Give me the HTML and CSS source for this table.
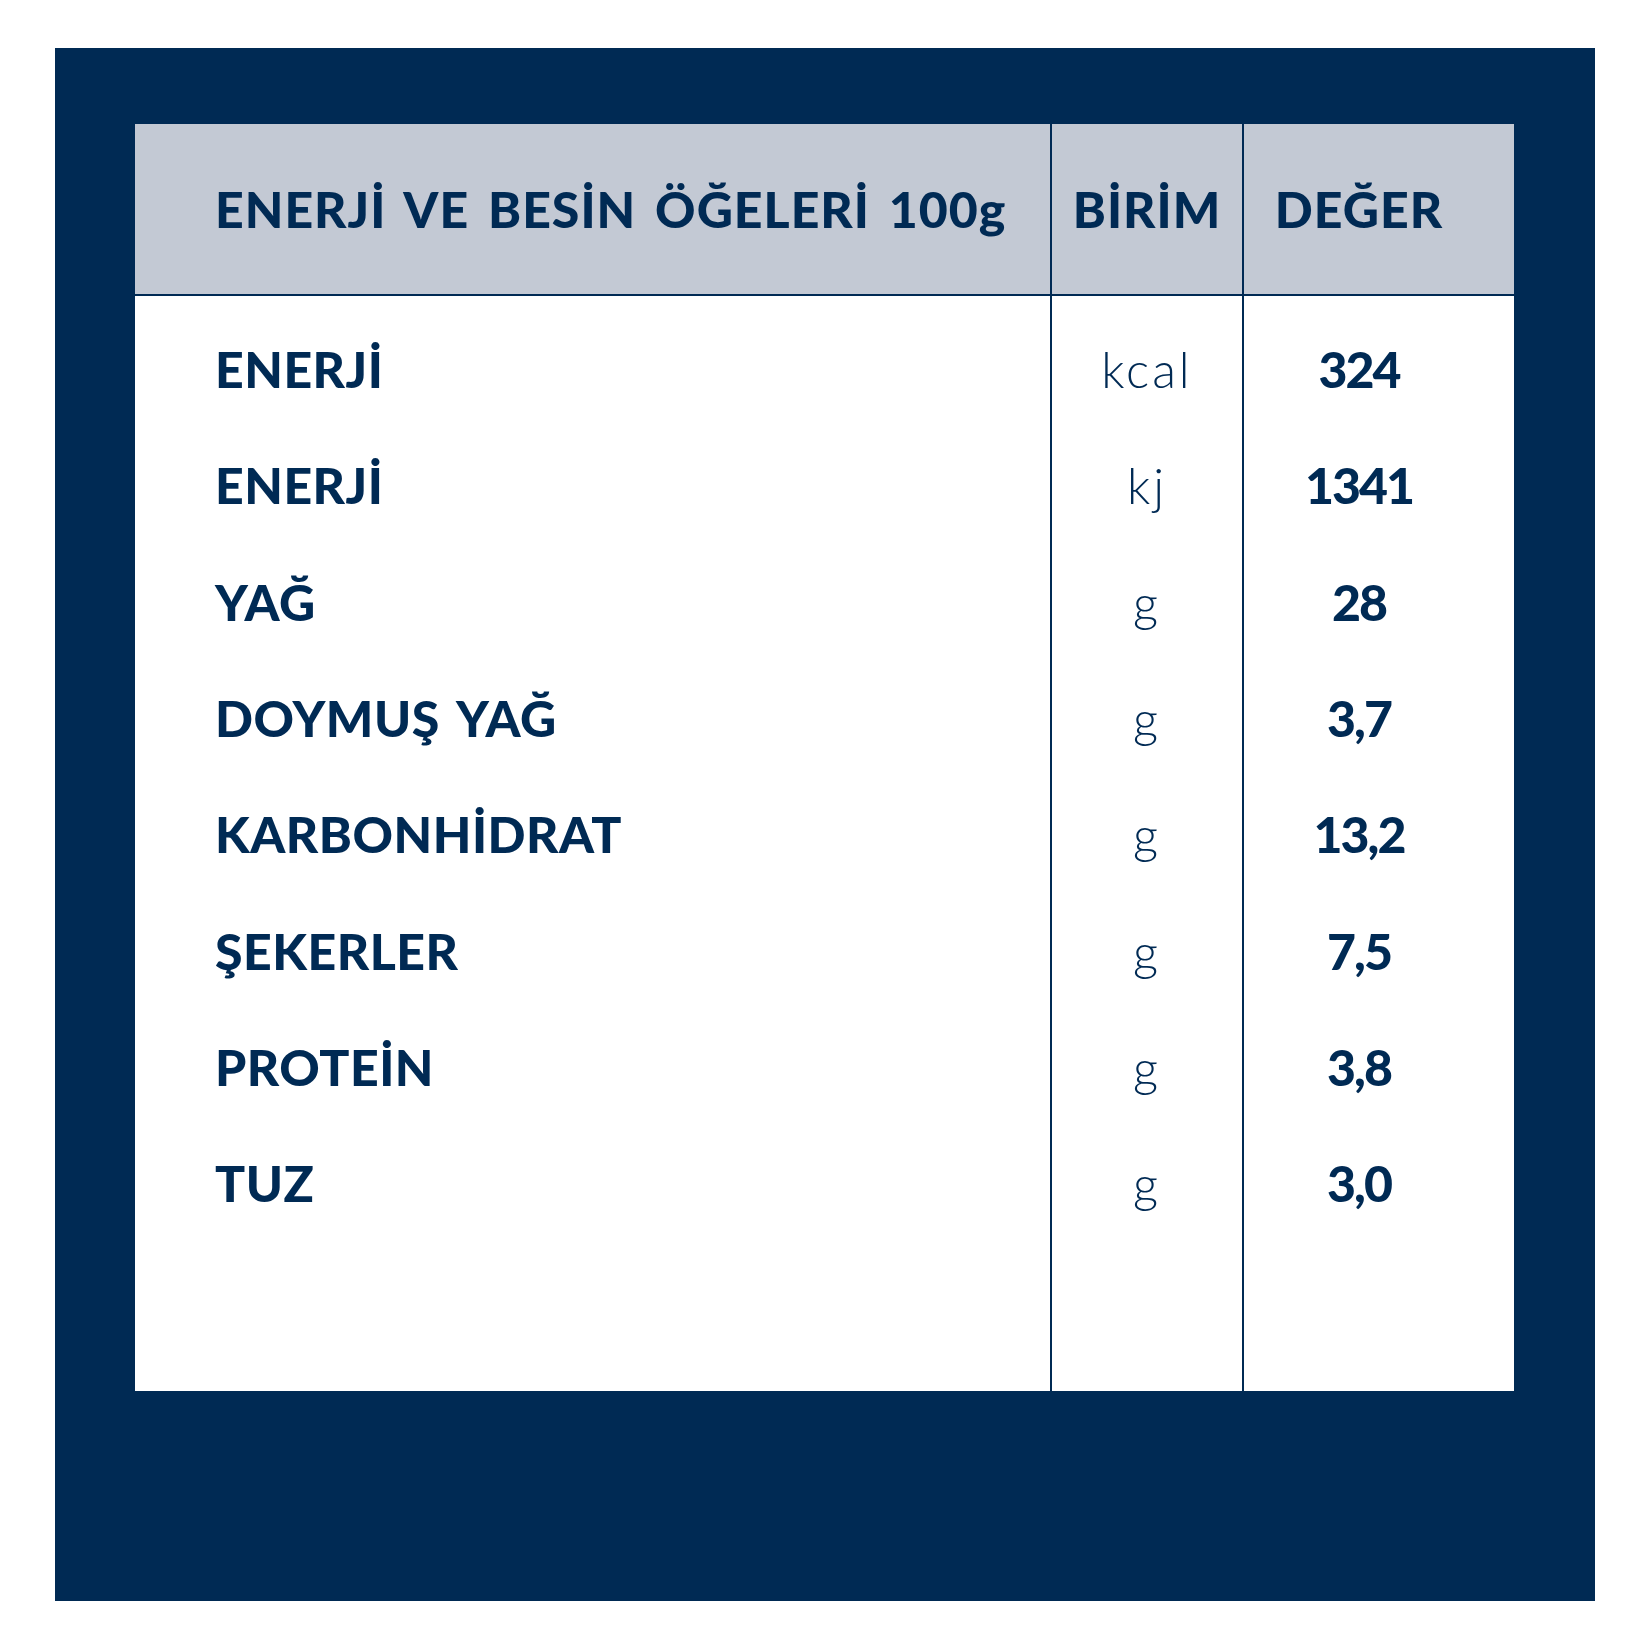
FILE: index.html
```html
<!DOCTYPE html>
<html lang="tr">
<head>
<meta charset="utf-8">
<title>Besin Değerleri</title>
<link rel="stylesheet" href="styles.css">
</head>
<body>
<div class="page">
  <div class="frame">
    <table class="nutri">
      <colgroup>
        <col class="col-name">
        <col class="col-unit">
        <col class="col-val">
      </colgroup>
      <thead>
        <tr>
          <th class="name">ENERJİ VE BESİN ÖĞELERİ 100g</th>
          <th class="unit">BİRİM</th>
          <th class="val">DEĞER</th>
        </tr>
      </thead>
      <tbody>
        <tr class="spacer"><td class="name"></td><td class="unit"></td><td class="val"></td></tr>
        <tr class="row"><td class="name">ENERJİ</td><td class="unit">kcal</td><td class="val">324</td></tr>
        <tr class="row"><td class="name">ENERJİ</td><td class="unit">kj</td><td class="val">1341</td></tr>
        <tr class="row"><td class="name">YAĞ</td><td class="unit">g</td><td class="val">28</td></tr>
        <tr class="row"><td class="name">DOYMUŞ YAĞ</td><td class="unit">g</td><td class="val">3,7</td></tr>
        <tr class="row"><td class="name">KARBONHİDRAT</td><td class="unit">g</td><td class="val">13,2</td></tr>
        <tr class="row"><td class="name">ŞEKERLER</td><td class="unit">g</td><td class="val">7,5</td></tr>
        <tr class="row"><td class="name">PROTEİN</td><td class="unit">g</td><td class="val">3,8</td></tr>
        <tr class="row"><td class="name">TUZ</td><td class="unit">g</td><td class="val">3,0</td></tr>
        <tr class="filler"><td class="name"></td><td class="unit"></td><td class="val"></td></tr>
      </tbody>
    </table>
  </div>
</div>
</body>
</html>
```

FILE: styles.css
```css
html, body {
  margin: 0;
  padding: 0;
  background: #ffffff;
}

.page {
  padding: 48px 0 0 55px;
}

.frame {
  width: 1540px;
  height: 1553px;
  box-sizing: border-box;
  padding: 76px 81px 0 80px;
  background: #002a54;
}

.nutri {
  width: 1379px;
  table-layout: fixed;
  border-collapse: separate;
  border-spacing: 0;
  background: #ffffff;
  color: #002a54;
  font-family: "Lato", "Noto Sans", sans-serif;
}

.col-name { width: 917px; }
.col-unit { width: 192px; }
.col-val  { width: 270px; }

.nutri th,
.nutri td {
  box-sizing: border-box;
  padding: 0;
  vertical-align: middle;
}

.nutri th {
  height: 172px;
  background: #c3c9d4;
  border-bottom: 2px solid #002a54;
  font-size: 50px;
  font-weight: 900;
  letter-spacing: 1px;
  white-space: nowrap;
}

.nutri .name {
  text-align: left;
  padding-left: 80px;
  border-right: 2px solid #002a54;
}

.nutri .unit {
  text-align: center;
  border-right: 2px solid #002a54;
}

.nutri .val {
  text-align: center;
  padding-right: 40px;
}

.nutri th.name {
  word-spacing: 6px;
}

.spacer td {
  height: 15px;
}

.row td {
  height: 116.3px;
  font-size: 50px;
  line-height: 60px;
}

.row .name {
  font-weight: 900;
  letter-spacing: 0.5px;
  word-spacing: 6px;
}

.row .unit {
  font-weight: 300;
  font-size: 49px;
  letter-spacing: 3px;
}

.row .val {
  font-weight: 900;
  letter-spacing: -2px;
}

.filler td {
  height: 150px;
}
```
